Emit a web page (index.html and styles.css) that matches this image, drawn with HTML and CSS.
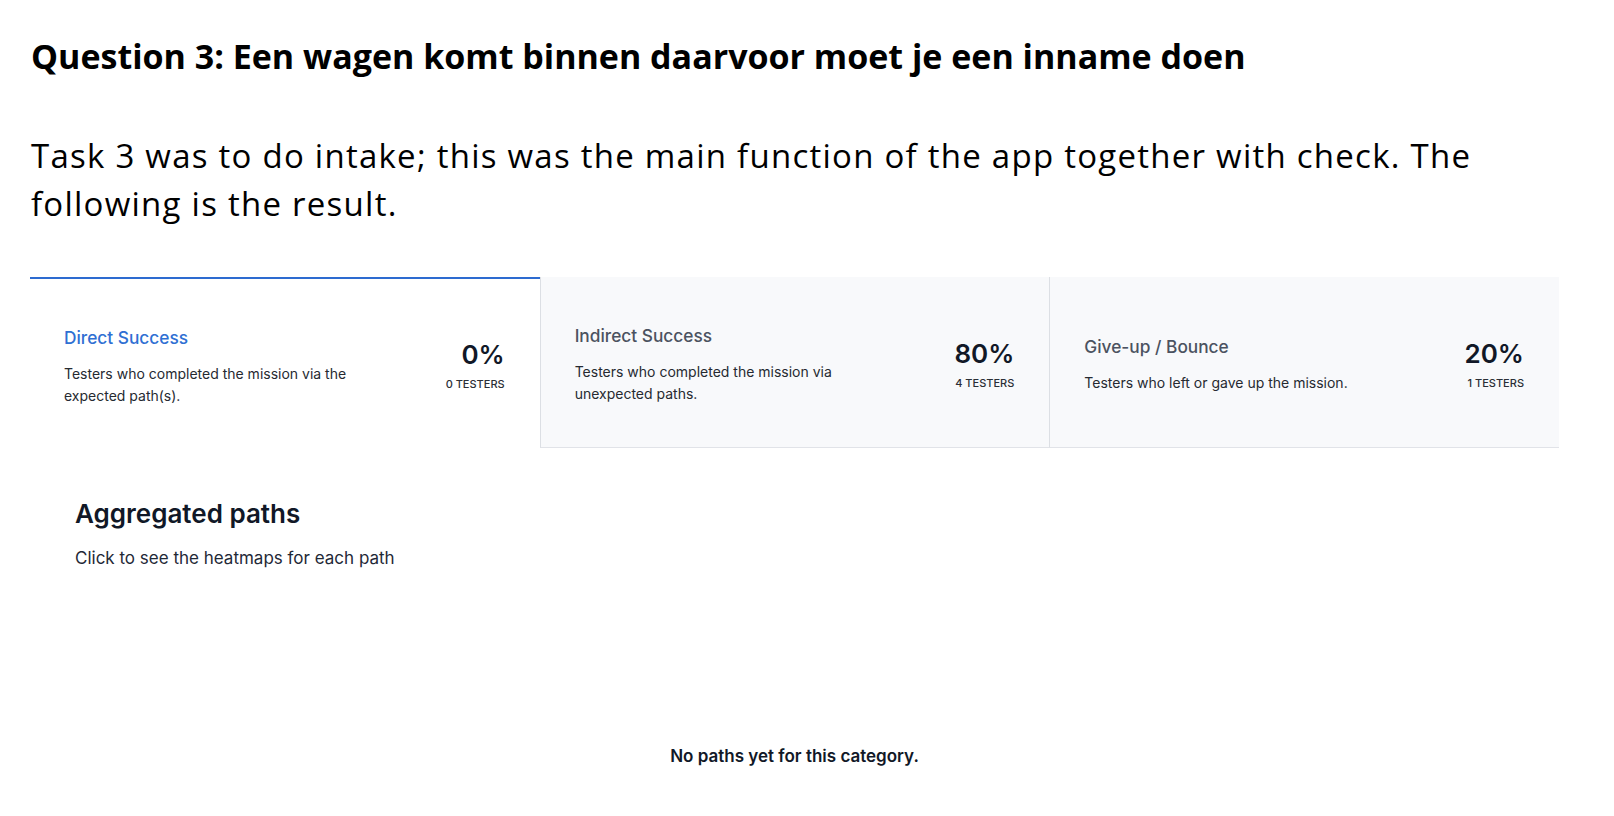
FILE: index.html
```html
<!DOCTYPE html>
<html lang="en">
<head>
<meta charset="utf-8">
<title>Question 3</title>
<link rel="stylesheet" href="styles.css">
</head>
<body>
<div class="doc">
  <h1 class="q-title">Question 3: Een wagen komt binnen daarvoor moet je een inname doen</h1>
  <p class="q-text">Task 3 was to do intake; this was the main function of the app together with check. The following is the result.</p>
</div>
<div class="panel">
  <div class="cards">
    <div class="card card-active">
      <div class="card-info">
        <div class="card-title title-blue">Direct Success</div>
        <div class="card-desc">Testers who completed the mission via the<br>expected path(s).</div>
      </div>
      <div class="card-stat">
        <div class="stat-pct">0%</div>
        <div class="stat-count">0 TESTERS</div>
      </div>
    </div>
    <div class="card card-muted">
      <div class="card-info">
        <div class="card-title">Indirect Success</div>
        <div class="card-desc">Testers who completed the mission via<br>unexpected paths.</div>
      </div>
      <div class="card-stat">
        <div class="stat-pct">80%</div>
        <div class="stat-count">4 TESTERS</div>
      </div>
    </div>
    <div class="card card-muted">
      <div class="card-info">
        <div class="card-title">Give-up / Bounce</div>
        <div class="card-desc">Testers who left or gave up the mission.</div>
      </div>
      <div class="card-stat">
        <div class="stat-pct">20%</div>
        <div class="stat-count">1 TESTERS</div>
      </div>
    </div>
  </div>
  <div class="paths">
    <h2 class="paths-title">Aggregated paths</h2>
    <p class="paths-sub">Click to see the heatmaps for each path</p>
  </div>
  <div class="empty">No paths yet for this category.</div>
</div>
</body>
</html>
```

FILE: styles.css
```css
html, body {
  margin: 0;
  padding: 0;
  background: #ffffff;
}

.doc {
  padding: 33px 0 0 31px;
  font-family: "Open Sans", "Noto Sans", sans-serif;
  color: #000;
}

.q-title {
  margin: 0;
  font-size: 34px;
  line-height: 46px;
  font-weight: 700;
  letter-spacing: 0;
}

.q-text {
  margin: 53px 0 0 0;
  width: 1480px;
  font-size: 33px;
  line-height: 48px;
  font-weight: 400;
  letter-spacing: 1.25px;
}

.panel {
  margin: 49px 0 0 30px;
  width: 1529px;
  font-family: "Inter", "Roboto", sans-serif;
}

.cards {
  display: grid;
  grid-template-columns: 1fr 1fr 1fr;
  height: 171px;
}

.card {
  display: flex;
  align-items: center;
  justify-content: space-between;
  padding: 5px 35px 0 34px;
  box-sizing: border-box;
}

.card-active {
  background: #ffffff;
  border-top: 2px solid #2d6bd0;
}

.card-muted {
  background: #f8f9fb;
  border-left: 1px solid #dcdfe4;
  border-bottom: 1px solid #e1e3e8;
}

.card-title {
  font-size: 17.3px;
  line-height: 24px;
  font-weight: 500;
  color: #4b5260;
}

.title-blue {
  color: #2f6fd3;
}

.card-desc {
  margin-top: 13px;
  font-size: 14px;
  line-height: 22px;
  color: #262a31;
}

.card-stat {
  text-align: right;
}

.stat-pct {
  font-size: 26px;
  line-height: 30px;
  font-weight: 600;
  color: #111827;
}

.stat-count {
  margin-top: 6px;
  font-size: 11px;
  line-height: 16px;
  font-weight: 500;
  color: #2b2f36;
}

.paths {
  padding: 50px 0 0 45px;
}

.paths-title {
  margin: 0;
  font-size: 26px;
  line-height: 32px;
  font-weight: 600;
  color: #111827;
}

.paths-sub {
  margin: 16px 0 0 0;
  font-size: 17px;
  line-height: 24px;
  color: #1f2937;
}

.empty {
  margin-top: 174px;
  text-align: center;
  font-size: 17px;
  line-height: 24px;
  font-weight: 600;
  color: #111827;
}
```
